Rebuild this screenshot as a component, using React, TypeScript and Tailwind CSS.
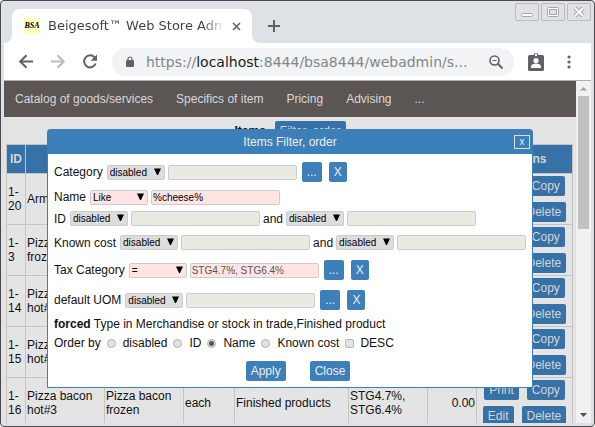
import type { ReactNode } from "react";

const field = "h-[15px] w-[129px] shrink-0 rounded-[2px] border border-[#cccccc] px-px text-[10px] leading-[13px] outline-none";
const blueButton = "flex h-5 shrink-0 items-center rounded-[2px] bg-[#3c7fb9] px-[5px] text-[12px] leading-[14px] text-[#eeeeee]";
const dimButton = "flex h-5 items-center rounded-[2px] bg-[#3671a7] px-[5px] text-[12px] leading-[14px] text-[#d5d5d5]";
const cell = "border border-[#c4c4c4] px-px align-middle";

function Operator({ label, options, active = false }: { label: string; options: string[]; active?: boolean }) {
  return (
    <span className="relative mr-[3px] flex shrink-0">
      <select
        aria-label={label}
        className={`h-[15px] w-[58px] appearance-none rounded-[2px] border border-[#cccccc] pl-[2px] text-[10px] leading-[13px] text-black ${active ? "bg-[#ffe4e4]" : "bg-[#dddddd]"}`}
      >
        {options.map((o) => (
          <option key={o}>{o}</option>
        ))}
      </select>
      <svg className="pointer-events-none absolute top-[3px] right-1" width="7" height="7" viewBox="0 0 7 7" aria-hidden="true">
        <path d="M0 0.500h7L4 7H3z" fill="#000" />
      </svg>
    </span>
  );
}

function Value({ label, value = "", tone = "off" }: { label: string; value?: string; tone?: "off" | "edit" | "read" }) {
  const tones = {
    off: "bg-[#eaeae2] text-[#555555]",
    edit: "bg-[#ffe4e4] text-black",
    read: "bg-[#ffe4e4] text-[#555555]",
  };
  return <input aria-label={label} type="text" defaultValue={value} readOnly={tone !== "edit"} className={`${field} ${tones[tone]}`} />;
}

function Row({ height, children }: { height: string; children: ReactNode }) {
  return <div className={`flex items-center whitespace-nowrap ${height}`}>{children}</div>;
}

function Pickers() {
  return (
    <>
      <button type="button" aria-label="Choose" className={`${blueButton} ml-[5px]`}>...</button>
      <button type="button" aria-label="Clear" className={`${blueButton} ml-[7px]`}>X</button>
    </>
  );
}

function Order({ label, checked = false }: { label: string; checked?: boolean }) {
  return (
    <label className="flex items-center">
      <input
        type="radio"
        name="order"
        defaultChecked={checked}
        className="mr-[7px] ml-[6px] h-[9px] w-[9px] appearance-none rounded-full border border-[#b0b0b0] bg-[#e2e2e2] checked:bg-[radial-gradient(circle,#555_0_2px,#e2e2e2_3px)]"
      />
      {label}
    </label>
  );
}

function FilterDialog() {
  return (
    <div role="dialog" aria-label="Items Filter, order" className="absolute top-[48px] right-[43px] left-[43px] rounded-t-[3px] border border-[#3c7fb9] bg-white">
      <div className="relative flex h-[24px] items-center justify-center bg-[#3c7fb9] text-[#eeeeee]">
        Items Filter, order
        <button type="button" aria-label="Close dialog" className="absolute top-[5px] right-[2px] flex h-[14px] w-4 items-center justify-center border border-[#dddddd] text-[10px] leading-[12px]">
          x
        </button>
      </div>
      <form className="px-[6px] pt-[3px] pb-[6px]" onSubmit={(e) => e.preventDefault()}>
        <Row height="h-[30px]">
          <span className="mr-1">Category</span>
          <Operator label="Category operator" options={["disabled", "="]} />
          <Value label="Category" />
          <Pickers />
        </Row>
        <Row height="h-5">
          <span className="mr-1">Name</span>
          <Operator label="Name operator" options={["Like", "disabled"]} active />
          <Value label="Name" value="%cheese%" tone="edit" />
        </Row>
        <Row height="h-[23px]">
          <span className="mr-1">ID</span>
          <Operator label="ID first operator" options={["disabled", "="]} />
          <Value label="ID from" />
          <span className="mx-[3px]">and</span>
          <Operator label="ID second operator" options={["disabled", "="]} />
          <Value label="ID to" />
        </Row>
        <Row height="h-[25px]">
          <span className="mr-1">Known cost</span>
          <Operator label="Known cost first operator" options={["disabled", "="]} />
          <Value label="Known cost from" />
          <span className="mx-[3px]">and</span>
          <Operator label="Known cost second operator" options={["disabled", "="]} />
          <Value label="Known cost to" />
        </Row>
        <Row height="h-[30px]">
          <span className="mr-1">Tax Category</span>
          <Operator label="Tax category operator" options={["=", "disabled"]} active />
          <Value label="Tax Category" value="STG4.7%, STG6.4%" tone="read" />
          <Pickers />
        </Row>
        <Row height="h-[30px]">
          <span className="mr-1">default UOM</span>
          <Operator label="Default UOM operator" options={["disabled", "="]} />
          <Value label="default UOM" />
          <Pickers />
        </Row>
        <Row height="h-[18px]">
          <p>
            <b>forced</b> Type in Merchandise or stock in trade,Finished product
          </p>
        </Row>
        <Row height="h-5">
          <span>Order by</span>
          <Order label="disabled" />
          <Order label="ID" />
          <Order label="Name" checked />
          <Order label="Known cost" />
          <label className="flex items-center">
            <input type="checkbox" className="mr-[6px] ml-[6px] h-[9px] w-[9px] appearance-none rounded-[2px] border border-[#b8b8b8] bg-[#e2e2e2]" />
            DESC
          </label>
        </Row>
        <div className="flex justify-center gap-6 pt-2 pl-4">
          <button type="submit" className={blueButton}>Apply</button>
          <button type="button" className={blueButton}>Close</button>
        </div>
      </form>
    </div>
  );
}

const items = [
  { id: "1-20", name: "Armchair", spec: "Armchair" },
  { id: "1-3", name: "Pizza cheese frozen", spec: "Pizza cheese" },
  { id: "1-14", name: "Pizza cheese hot#1", spec: "Pizza cheese frozen" },
  { id: "1-15", name: "Pizza cheese hot#2", spec: "Pizza cheese frozen" },
  { id: "1-16", name: "Pizza bacon hot#3", spec: "Pizza bacon frozen" },
];

function ItemsTable() {
  return (
    <table className="w-full table-fixed border-collapse">
      <colgroup>
        <col className="w-[19px]" />
        <col className="w-[79px]" />
        <col className="w-[79px]" />
        <col className="w-[51px]" />
        <col className="w-[114px]" />
        <col className="w-[79px]" />
        <col className="w-[49px]" />
        <col />
      </colgroup>
      <thead>
        <tr className="h-[29px] bg-[#3671a7] text-[#d5d5d5]">
          {["ID", "Name", "Made of", "UOM", "Type", "Tax cat.", "Cost", "Actions"].map((h) => (
            <th key={h} className={cell}>{h}</th>
          ))}
        </tr>
      </thead>
      <tbody>
        {items.map((item) => (
          <tr key={item.id} className="h-[51px]">
            <td className={cell}>{item.id}</td>
            <td className={cell}>{item.name}</td>
            <td className={cell}>{item.spec}</td>
            <td className={cell}>each</td>
            <td className={cell}>Finished products</td>
            <td className={cell}>STG4.7%, STG6.4%</td>
            <td className={`${cell} text-right`}>0.00</td>
            <td className={cell}>
              <div className="flex flex-col items-center gap-[6px]">
                <div className="flex gap-2">
                  <button type="button" className={dimButton}>Print</button>
                  <button type="button" className={dimButton}>Copy</button>
                </div>
                <div className="flex gap-2">
                  <button type="button" className={dimButton}>Edit</button>
                  <button type="button" className={dimButton}>Delete</button>
                </div>
              </div>
            </td>
          </tr>
        ))}
      </tbody>
    </table>
  );
}

function WindowButton({ label, children }: { label: string; children: ReactNode }) {
  return (
    <button type="button" aria-label={label} className="flex h-[18px] w-6 items-center justify-center rounded-[2px] border border-[#b9bbc0] bg-[#dee1e6]">
      <svg width="14" height="12" viewBox="0 0 14 12" fill="none">{children}</svg>
    </button>
  );
}

function BrowserTop() {
  return (
    <header className="font-['DejaVu_Sans',sans-serif]">
      <div className="flex h-[42px] items-start">
        <svg className="shrink-0 self-end" width="8" height="8" viewBox="0 0 8 8" aria-hidden="true"><path d="M8 0v8H0a8 8 0 0 0 8-8z" fill="#fff" /></svg>
        <div className="flex h-[34px] w-[240px] items-center self-end rounded-t-[8px] bg-white pl-3">
          <span className="flex h-4 w-4 shrink-0 items-center justify-center bg-[#ffffc0] font-['Liberation_Serif',serif] text-[8px] font-bold text-black italic">BSA</span>
          <span className="ml-2 w-[176px] shrink-0 overflow-hidden bg-linear-to-r from-[#3c4043] from-88% to-transparent bg-clip-text text-[13px] leading-4 whitespace-nowrap text-transparent">
            Beigesoft™ Web Store Admin
          </span>
          <button type="button" aria-label="Close tab" className="ml-2 shrink-0">
            <svg width="9" height="9" viewBox="0 0 9 9"><path d="M1 1l7 7M8 1l-7 7" stroke="#5f6368" strokeWidth="1.6" /></svg>
          </button>
        </div>
        <svg className="shrink-0 self-end" width="8" height="8" viewBox="0 0 8 8" aria-hidden="true"><path d="M0 0v8h8a8 8 0 0 1-8-8z" fill="#fff" /></svg>
        <button type="button" aria-label="New tab" className="mt-[19px] ml-2">
          <svg width="12" height="12" viewBox="0 0 12 12"><path d="M6 0v12M0 6h12" stroke="#5f6368" strokeWidth="2" /></svg>
        </button>
        <div className="mt-[2px] ml-auto flex gap-[2px]">
          <WindowButton label="Minimise">
            <rect x="1.500" y="7.500" width="11" height="3" rx="1" fill="#fff" stroke="#a4a6aa" />
          </WindowButton>
          <WindowButton label="Maximise">
            <rect x="1.500" y="1.500" width="11" height="9" rx="1" fill="#fff" stroke="#a4a6aa" />
            <rect x="3.500" y="3.500" width="7" height="5" fill="#dee1e6" stroke="#a4a6aa" />
          </WindowButton>
          <WindowButton label="Close">
            <path d="M3 2l8 8M11 2l-8 8" stroke="#a4a6aa" strokeWidth="4" />
            <path d="M3 2l8 8M11 2l-8 8" stroke="#fff" strokeWidth="2" />
          </WindowButton>
        </div>
      </div>
      <div className="flex h-[38px] items-center border-b border-[#aeaeae] bg-white">
        <button type="button" aria-label="Back" className="ml-[14px]">
          <svg width="16" height="16" viewBox="0 0 16 16" fill="none" stroke="#5f6368" strokeWidth="2"><path d="M15 7.500H2.500M8.500 1.200L2.200 7.500l6.300 6.300" /></svg>
        </button>
        <button type="button" aria-label="Forward" className="ml-4">
          <svg width="16" height="16" viewBox="0 0 16 16" fill="none" stroke="#babcbe" strokeWidth="2"><path d="M1 7.500h12.500M7.500 1.200l6.300 6.300-6.300 6.300" /></svg>
        </button>
        <button type="button" aria-label="Reload" className="ml-4">
          <svg width="16" height="16" viewBox="0 0 16 16"><path d="M12.600 3.400A6 6 0 1 0 13.700 9.500" fill="none" stroke="#5f6368" strokeWidth="2" /><path d="M15 0.500v6.300H8.700z" fill="#5f6368" /></svg>
        </button>
        <div className="ml-[14px] flex h-7 min-w-0 flex-1 items-center rounded-full bg-[#f1f3f4] pr-[11px] pl-[14px]">
          <svg className="shrink-0" width="8" height="11" viewBox="0 0 8 11"><rect y="4" width="8" height="7" rx="1" fill="#5f6368" /><path d="M2 5V3a2 2 0 0 1 4 0v2" fill="none" stroke="#5f6368" strokeWidth="1.200" /></svg>
          <span className="ml-3 flex-1 truncate text-[14px] leading-5 text-[#80868b]">
            https://<span className="text-[#202124]">localhost</span>:8444/bsa8444/webadmin/s...
          </span>
          <svg className="shrink-0" width="14" height="14" viewBox="0 0 14 14" fill="none" stroke="#5f6368"><circle cx="5.500" cy="5.500" r="4.500" strokeWidth="1.600" /><path d="M9 9l4.500 4.500" strokeWidth="2" /><path d="M3.500 5.500h4" /></svg>
        </div>
        <button type="button" aria-label="Profile" className="ml-[14px]">
          <svg width="16" height="19" viewBox="0 0 16 19"><path d="M1.500 3h3.700a3 3 0 0 1 5.600 0h3.700A1.500 1.500 0 0 1 16 4.500v13a1.500 1.500 0 0 1-1.500 1.500h-13A1.500 1.500 0 0 1 0 17.500v-13A1.500 1.500 0 0 1 1.500 3z" fill="#5f6368" /><circle cx="8" cy="3" r="1.200" fill="#fff" /><circle cx="8" cy="8.500" r="2.600" fill="#fff" /><path d="M3 16v-1.500c0-2 3-3 5-3s5 1 5 3V16z" fill="#fff" /></svg>
        </button>
        <button type="button" aria-label="Menu" className="mr-5 ml-[23px]">
          <svg width="4" height="14" viewBox="0 0 4 14" fill="#5f6368"><circle cx="2" cy="2" r="1.600" /><circle cx="2" cy="7" r="1.600" /><circle cx="2" cy="12" r="1.600" /></svg>
        </button>
      </div>
    </header>
  );
}

export default function App() {
  return (
    <div className="h-screen bg-white">
      <div className="flex h-full flex-col rounded-[4px] border border-[#4a4a4e] bg-[#dee1e6] px-[3px] pb-[3px]">
        <BrowserTop />
        <div className="flex min-h-0 flex-1">
          <main className="relative min-w-0 flex-1 bg-[#e4e4e4] font-['Liberation_Sans',Arial,sans-serif] text-[12px] leading-[14px] text-[#111111]">
            <div className="h-full overflow-hidden">
              <nav className="flex h-9 items-center gap-[23px] bg-[#5b5654] px-[11px] text-[#d8d8d8]">
                {["Catalog of goods/services", "Specifics of item", "Pricing", "Advising", "..."].map((t) => (
                  <a key={t} href="#">{t}</a>
                ))}
              </nav>
              <div className="flex h-[27px] items-center justify-center gap-[9px] pt-px">
                <h1 className="font-bold">Items</h1>
                <button type="button" className={dimButton}>Filter, order</button>
              </div>
              <div className="pr-[3px] pl-[2px]">
                <ItemsTable />
              </div>
            </div>
            <FilterDialog />
          </main>
          <div className="flex w-[15px] flex-col items-center bg-[#f1f1f1]" aria-hidden="true">
            <svg className="my-[5px] shrink-0" width="7" height="5" viewBox="0 0 7 5"><path d="M0 4.500L3.500 1 7 4.500z" fill="#a3a3a3" /></svg>
            <div className="h-[133px] w-[11px] shrink-0 bg-[#c1c1c1]" />
            <svg className="mt-auto mb-[6px] shrink-0" width="7" height="4" viewBox="0 0 7 4"><path d="M0 0h7L3.500 4z" fill="#505050" /></svg>
          </div>
        </div>
      </div>
    </div>
  );
}
